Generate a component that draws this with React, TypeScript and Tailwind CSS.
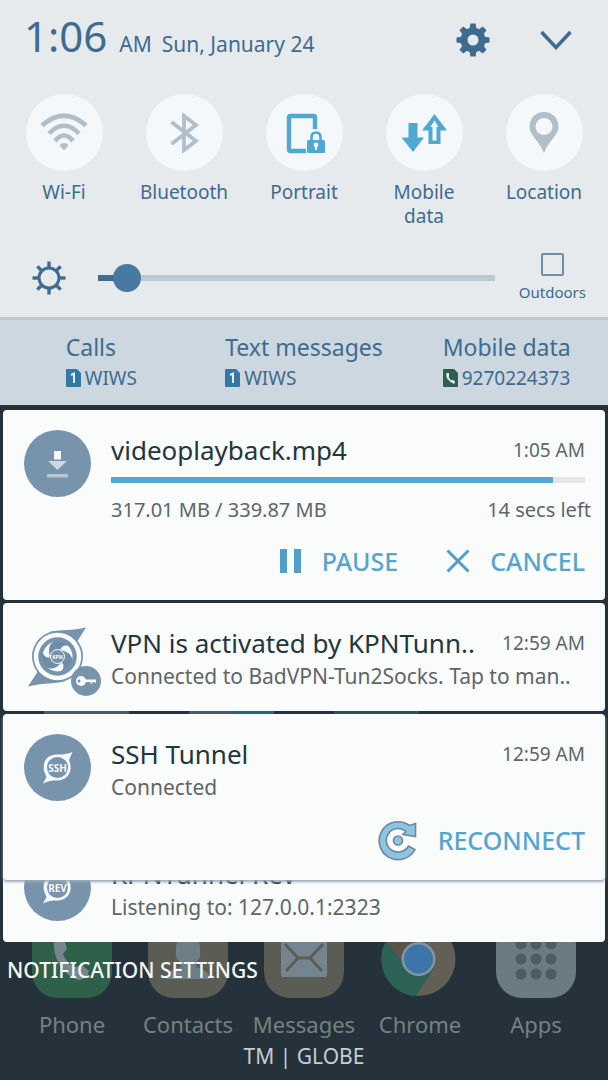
import { useState, type ReactNode } from "react"

const WifiIcon = () => (
  <svg className="size-12" viewBox="0 0 48 48" fill="none" stroke="#b0c0ca" strokeWidth="4.600">
    <path d="M2 16.500Q24 -3 46 16.500" />
    <path d="M9 24.500Q24 9 39 24.500" />
    <path d="M15 32Q24 21 33 32" />
    <path d="M19.500 36Q24 32 28.500 36L24 41.500Z" fill="#b0c0ca" stroke="none" />
  </svg>
)

const BluetoothIcon = () => (
  <svg className="size-12" viewBox="0 0 48 48" fill="none" stroke="#b0c0ca" strokeWidth="3.800">
    <path d="M11.500 13L36 32L24 41V7L36 16L11.500 35" />
  </svg>
)

const PortraitIcon = () => (
  <svg className="size-12" viewBox="0 0 48 48" fill="none">
    <path
      d="M26 42H10.500Q9 42 9 40.500V8.500Q9 7 10.500 7H33.500Q35 7 35 8.500V20"
      stroke="#4fa8d2"
      strokeWidth="4.400"
    />
    <rect x="27" y="31" width="18" height="13" rx="1.500" fill="#4fa8d2" />
    <path d="M31.500 32V28.500Q31.500 23.500 36 23.500Q40.500 23.500 40.500 28.500V32" stroke="#4fa8d2" strokeWidth="2.600" />
    <circle cx="36" cy="36" r="2.400" fill="#f5f8fa" />
    <path d="M36 36V41" stroke="#f5f8fa" strokeWidth="2" />
  </svg>
)

const MobileDataIcon = () => (
  <svg className="size-12" viewBox="0 0 48 48" fill="#4fa8d2">
    <path d="M8.500 14H17.500V28.500H24L13 43L1.500 28.500H8.500Z" />
    <path
      fillRule="evenodd"
      d="M34.500 5L47 21.500H40.500V35H28.500V21.500H22ZM34.500 11.500L30.500 18H32.500V31.500H36.500V18H38.500Z"
    />
  </svg>
)

const LocationIcon = () => (
  <svg className="size-12" viewBox="0 0 48 48">
    <path
      fill="#b0c0ca"
      fillRule="evenodd"
      d="M24 3C16 3 9.500 9 9.500 17.500C9.500 26 18 30 24 44C30 30 38.500 26 38.500 17.500C38.500 9 32 3 24 3ZM24 9A8.500 8.500 0 1 1 24 26A8.500 8.500 0 1 1 24 9Z"
    />
  </svg>
)

const spokes = [0, 45, 90, 135, 180, 225, 270, 315]

const GearIcon = () => (
  <svg className="size-[34px]" viewBox="0 0 34 34">
    <circle cx="17" cy="17" r="9" fill="none" stroke="#3f6b90" strokeWidth="7" />
    {spokes.map((angle) => (
      <path
        key={angle}
        d="M13.500 6.500L14.400 0.500H19.600L20.500 6.500Z"
        fill="#3f6b90"
        transform={`rotate(${angle} 17 17)`}
      />
    ))}
  </svg>
)

const BrightnessIcon = () => (
  <svg className="size-[34px] shrink-0" viewBox="0 0 34 34" fill="none" stroke="#3f6b90">
    <circle cx="17" cy="17" r="10" strokeWidth="3" />
    {spokes.map((angle) => (
      <path key={angle} d="M17 0.500V6" strokeWidth="3.400" transform={`rotate(${angle} 17 17)`} />
    ))}
  </svg>
)

const SimIcon = () => (
  <svg className="h-[18px] w-[15px]" viewBox="0 0 15 18">
    <path d="M1 0H11L15 4V17Q15 18 14 18H1Q0 18 0 17V1Q0 0 1 0Z" fill="#3478a5" />
    <path d="M5 6L8 4.500V14" fill="none" stroke="#e3edf3" strokeWidth="2" />
  </svg>
)

const SimCallIcon = () => (
  <svg className="h-[18px] w-[15px]" viewBox="0 0 15 18">
    <path d="M1 0H11L15 4V17Q15 18 14 18H1Q0 18 0 17V1Q0 0 1 0Z" fill="#2f5f50" />
    <path d="M4.500 4.500Q3.500 11 11 13.500" fill="none" stroke="#e3edf3" strokeWidth="2" />
    <path d="M3.500 4L6 4V7.500L4 8ZM8.500 12L10 10.800L12 12.500L11.500 14.500H10Z" fill="#e3edf3" />
  </svg>
)

const DownloadBadge = () => (
  <svg className="size-[67px] shrink-0" viewBox="0 0 67 67">
    <circle cx="33.500" cy="33.500" r="33.500" fill="#7794ac" />
    <rect x="30" y="21" width="7" height="8.500" fill="#f7fafc" />
    <path d="M24 31H43L33.500 40Z" fill="#ccd8e1" />
    <rect x="23" y="44" width="21" height="3.500" fill="#b5c5d2" />
  </svg>
)

const TunnelBadge = ({ label }: { label: string }) => (
  <svg className="size-[67px] shrink-0" viewBox="0 0 67 67">
    <circle cx="33.500" cy="33.500" r="33.500" fill="#7794ac" />
    <path
      d="M20 37C18 24 26 20.500 34 20.500C40 20.500 44 20 48.500 18L45 26C50 38 43 46.500 33 46.500C28 46.500 24 47 19 49.500L22.500 43Z"
      fill="#f7fafc"
    />
    <circle cx="33.500" cy="33.500" r="10.500" fill="#7794ac" />
    <text
      x="33.500"
      y="37.500"
      textAnchor="middle"
      fill="#f7fafc"
      className="font-['Noto_Sans',sans-serif] text-[10px] font-bold"
    >
      {label}
    </text>
  </svg>
)

const VpnBadge = () => (
  <svg className="size-[67px] shrink-0 overflow-visible" viewBox="0 0 67 67">
    <path d="M25 9C38 6 48 8 62 4.500L51 22Z" fill="#7794ac" />
    <path d="M42 58C29 61 18 60 4 63.500L16 45Z" fill="#7794ac" />
    <circle cx="33.500" cy="33.500" r="25.500" fill="#7794ac" />
    <circle cx="33.500" cy="33.500" r="21.500" fill="none" stroke="#fafbfb" strokeWidth="4.500" />
    <circle cx="33.500" cy="33.500" r="16.500" fill="#fafbfb" />
    {[0, 120, 240].map((angle) => (
      <path
        key={angle}
        d="M26 33C24 26 25 21 31 17.500C38 15.500 44 18 48 24C41 21 37 23 36 28Z"
        fill="#6f8da6"
        transform={`rotate(${angle} 33.500 33.500)`}
      />
    ))}
    <circle cx="33.500" cy="33.500" r="16" fill="none" stroke="#7794ac" strokeWidth="2" />
    <circle cx="33.500" cy="33.500" r="7" fill="#7794ac" stroke="#fafbfb" strokeWidth="1" />
    <text
      x="33.500"
      y="35.500"
      textAnchor="middle"
      fill="#fafbfb"
      className="font-['Noto_Sans',sans-serif] text-[5px] font-bold"
    >
      KPN
    </text>
    <circle cx="62" cy="58" r="15" fill="#7794ac" />
    <circle cx="57" cy="58" r="5" fill="#fafbfb" />
    <circle cx="55" cy="58" r="1.500" fill="#7794ac" />
    <path d="M61 56.500H72V60H70.500V59H68.500V60.500H66.500V59H61Z" fill="#fafbfb" />
  </svg>
)

const PauseIcon = () => (
  <svg className="h-6 w-[22px]" viewBox="0 0 22 24" fill="#519fc9">
    <rect width="7" height="24" />
    <rect x="14" width="7" height="24" />
  </svg>
)

const CancelIcon = () => (
  <svg className="size-6" viewBox="0 0 24 24" stroke="#519fc9" strokeWidth="3">
    <path d="M1.500 1.500L22.500 22.500M22.500 1.500L1.500 22.500" />
  </svg>
)

const ReconnectIcon = () => (
  <svg className="-my-1 size-10 overflow-visible" viewBox="0 0 40 40" fill="#8ac6e3" stroke="#71869a" strokeWidth="1.600">
    <path d="M31.500 5.500L37.500 3.500V16.500L25 14.500L28 11.500A11.800 11.800 0 1 0 30.500 26L37 29.500A19 19 0 1 1 31.500 5.500Z" />
    <circle cx="20" cy="20.500" r="4.500" />
  </svg>
)

const PhoneApp = () => (
  <svg className="size-20" viewBox="0 0 80 80">
    <rect width="80" height="80" rx="26" fill="#2f6049" />
    <path
      d="M22 20L31 18L35 31L31 36Q34 45 44 49L50 47L57 53Q55 61 47 62C33 59 20 42 22 20Z"
      fill="#75868e"
    />
  </svg>
)

const ContactsApp = () => (
  <svg className="size-20" viewBox="0 0 80 80">
    <rect width="80" height="80" rx="26" fill="#5b5d54" />
    <path d="M28 34Q27 17 40 17Q53 17 52 34Q53 40 49 43L48 49Q61 52 62 61H18Q19 52 33 49L31 43Q27 40 28 34Z" fill="#6f7d86" />
  </svg>
)

const MessagesApp = () => (
  <svg className="size-20" viewBox="0 0 80 80">
    <rect width="80" height="80" rx="26" fill="#5b5d54" />
    <rect x="17" y="20" width="46" height="39" rx="2" fill="#75858f" />
    <path d="M21 26L34 40H46L59 26M34 40L22 53M46 40L58 53" fill="none" stroke="#5b5d54" strokeWidth="3" />
  </svg>
)

const ChromeApp = () => (
  <svg className="size-20" viewBox="0 0 80 80">
    <circle cx="38.500" cy="41" r="37" fill="#625f55" />
    <path d="M38.500 41L6.500 22.500A37 37 0 0 0 36 78L54 50Z" fill="#2c6156" />
    <path d="M6.500 22.500A37 37 0 0 1 70.500 22.500H38.500L24 48Z" fill="#5c5348" />
    <circle cx="38.500" cy="41" r="17" fill="#8494a1" />
    <circle cx="38.500" cy="41" r="14.500" fill="#3c75a8" />
  </svg>
)

const AppsApp = () => (
  <svg className="size-20" viewBox="0 0 80 80">
    <rect width="80" height="80" rx="26" fill="#6c7a82" />
    {[26, 41, 56].map((cy) =>
      [25, 40, 55].map((cx) => <circle key={`${cx}-${cy}`} cx={cx} cy={cy} r="5.500" fill="#4c5b64" />)
    )}
  </svg>
)

const toggles = [
  { name: "Wi-Fi", icon: <WifiIcon /> },
  { name: "Bluetooth", icon: <BluetoothIcon /> },
  { name: "Portrait", icon: <PortraitIcon /> },
  { name: "Mobile data", icon: <MobileDataIcon /> },
  { name: "Location", icon: <LocationIcon /> },
]

const sims = [
  { title: "Calls", value: "WIWS", icon: <SimIcon /> },
  { title: "Text messages", value: "WIWS", icon: <SimIcon /> },
  { title: "Mobile data", value: "9270224373", icon: <SimCallIcon /> },
]

const dock = [
  { name: "Phone", icon: <PhoneApp /> },
  { name: "Contacts", icon: <ContactsApp /> },
  { name: "Messages", icon: <MessagesApp /> },
  { name: "Chrome", icon: <ChromeApp /> },
  { name: "Apps", icon: <AppsApp /> },
]

const HomeScreen = () => (
  <div className="absolute inset-0 flex flex-col justify-end overflow-hidden pb-[42px]">
    <div className="mb-48 grid grid-cols-4 justify-items-center px-3.5">
      <div className="h-20 w-[85px] bg-[#4b5c66]" />
      <div className="h-20 w-[85px] bg-linear-to-r from-[#4b5c66] from-50% to-[#2f6076] to-50%" />
      <div className="h-20 w-[85px] bg-[#35504f]" />
    </div>
    <div className="grid grid-cols-5 px-3.5">
      {dock.map((app) => (
        <div key={app.name} className="flex flex-col items-center gap-3">
          {app.icon}
          <span className="text-[22px] leading-7 text-[#73827f]">{app.name}</span>
        </div>
      ))}
    </div>
  </div>
)

const QuickPanel = () => {
  const [brightness, setBrightness] = useState(4)

  return (
    <header className="bg-[#e6eaed] pt-2 text-[#3f6b90]">
      <div className="flex items-center pr-9 pl-6">
        <div className="flex items-baseline">
          <span className="text-[42px] leading-14">1:06</span>
          <span className="ml-3 text-[21px]">AM</span>
          <span className="ml-2.5 text-[21px]">Sun, January 24</span>
        </div>
        <button className="ml-auto pt-2" aria-label="Settings">
          <GearIcon />
        </button>
        <button className="ml-[50px] pt-2" aria-label="Expand">
          <svg className="h-5 w-8" viewBox="0 0 32 20" fill="none" stroke="#3f6b90" strokeWidth="3.500">
            <path d="M1.500 2L16 17.500L30.500 2" />
          </svg>
        </button>
      </div>
      <div className="mt-[30px] grid grid-cols-5 px-1">
        {toggles.map((toggle) => (
          <button key={toggle.name} className="flex flex-col items-center gap-[9px]">
            <span className="flex size-[77px] items-center justify-center rounded-full bg-[#f5f8fa]">
              {toggle.icon}
            </span>
            <span className="max-w-24 text-[19px] leading-6">{toggle.name}</span>
          </button>
        ))}
      </div>
      <div className="mt-[25px] flex items-center pr-[22px] pb-[15px] pl-8">
        <BrightnessIcon />
        <input
          type="range"
          aria-label="Brightness"
          min={0}
          max={100}
          value={brightness}
          onChange={(e) => setBrightness(Number(e.target.value))}
          className="mr-6 ml-8 h-1.5 min-w-0 flex-1 appearance-none [&::-webkit-slider-thumb]:size-7 [&::-webkit-slider-thumb]:appearance-none [&::-webkit-slider-thumb]:rounded-full [&::-webkit-slider-thumb]:bg-[#4779a3]"
          style={{
            background: `linear-gradient(to right, #3f6b90 ${brightness + 2}%, #bdc9d0 ${brightness + 2}%)`,
          }}
        />
        <label className="flex flex-col items-center gap-1.5 text-[15px] leading-5">
          <input
            type="checkbox"
            className="size-[23px] appearance-none rounded-xs border-2 border-[#6f8fab] checked:bg-[#3f6b90]"
          />
          Outdoors
        </label>
      </div>
    </header>
  )
}

const SimBar = () => (
  <section className="grid grid-cols-3 justify-items-center border-t-3 border-[#bccad3] bg-[#ccd7df] pt-[13px] pb-[15px] text-[#3f6b90]">
    {sims.map((sim) => (
      <div key={sim.title}>
        <div className="text-[23px] leading-7">{sim.title}</div>
        <div className="mt-[5px] flex items-center gap-1 text-[19px] leading-6">
          {sim.icon}
          {sim.value}
        </div>
      </div>
    ))}
  </section>
)

interface NotificationProps {
  icon: ReactNode
  title: string
  time?: string
  text?: string
  className?: string
  children?: ReactNode
}

const Notification = ({ icon, title, time, text, className, children }: NotificationProps) => (
  <article className={`rounded-sm bg-[#fafbfb] pt-5 pr-5 pl-[21px] ${className ?? ""}`}>
    <div className="flex gap-5">
      {icon}
      <div className="min-w-0 flex-1 pt-1">
        <div className="flex items-center justify-between">
          <h2 className="text-[26px] leading-8 whitespace-nowrap text-[#22363d]">{title}</h2>
          <time className="text-[19px] leading-6 whitespace-nowrap text-[#5f6668]">{time}</time>
        </div>
        {text && <p className="mt-[3px] text-[21px] leading-7 whitespace-nowrap text-[#5f6668]">{text}</p>}
        {children}
      </div>
    </div>
  </article>
)

const ActionButton = ({ icon, children }: { icon: ReactNode; children: ReactNode }) => (
  <button className="flex items-center gap-5 text-[25px] leading-8 font-medium text-[#57a5ce]">
    {icon}
    {children}
  </button>
)

const Download = () => {
  const done = 317.01
  const total = 339.87

  return (
    <>
      <div role="progressbar" aria-label="Download" className="mt-[11px] h-1.5 bg-[#e3e4e5]">
        <div className="h-full bg-[#4fa8d2]" style={{ width: `${(done / total) * 100}%` }} />
      </div>
      <div className="-mr-1.5 mt-[13px] flex justify-between text-xl leading-7 text-[#5f6668]">
        <span>
          {done} MB / {total} MB
        </span>
        <span>14 secs left</span>
      </div>
      <div className="mt-[21px] flex justify-end gap-12">
        <ActionButton icon={<PauseIcon />}>PAUSE</ActionButton>
        <ActionButton icon={<CancelIcon />}>CANCEL</ActionButton>
      </div>
    </>
  )
}

const App = () => {
  return (
    <div className="relative flex min-h-screen flex-col bg-[#25323c] font-['Noto_Sans',sans-serif]">
      <HomeScreen />
      <div className="relative flex flex-1 flex-col">
        <QuickPanel />
        <SimBar />
        <main className="mx-[3px] mt-[5px] flex flex-col gap-[3px]">
          <Notification icon={<DownloadBadge />} title="videoplayback.mp4" time="1:05 AM" className="pb-[23px]">
            <Download />
          </Notification>
          <Notification
            icon={<VpnBadge />}
            title="VPN is activated by KPNTunn.."
            time="12:59 AM"
            text="Connected to BadVPN-Tun2Socks. Tap to man.."
            className="pb-[21px]"
          />
          <Notification
            icon={<TunnelBadge label="SSH" />}
            title="SSH Tunnel"
            time="12:59 AM"
            text="Connected"
            className="relative z-10 pb-6 shadow-[0_2px_3px_#9aa9b5]"
          >
            <div className="mt-[23px] flex justify-end">
              <ActionButton icon={<ReconnectIcon />}>RECONNECT</ActionButton>
            </div>
          </Notification>
          <Notification
            icon={<TunnelBadge label="REV" />}
            title="KPNTunnel Rev"
            text="Listening to: 127.0.0.1:2323"
            className="-mt-[49px] pb-[21px]"
          />
        </main>
        <button className="mt-3.5 self-start pl-[7px] text-[21px] leading-7 font-medium text-[#f4f6f7]">
          NOTIFICATION SETTINGS
        </button>
        <footer className="mt-auto pb-3 text-center text-[21px] leading-6 text-[#c3ced6]">TM | GLOBE</footer>
      </div>
    </div>
  )
}

export default App
